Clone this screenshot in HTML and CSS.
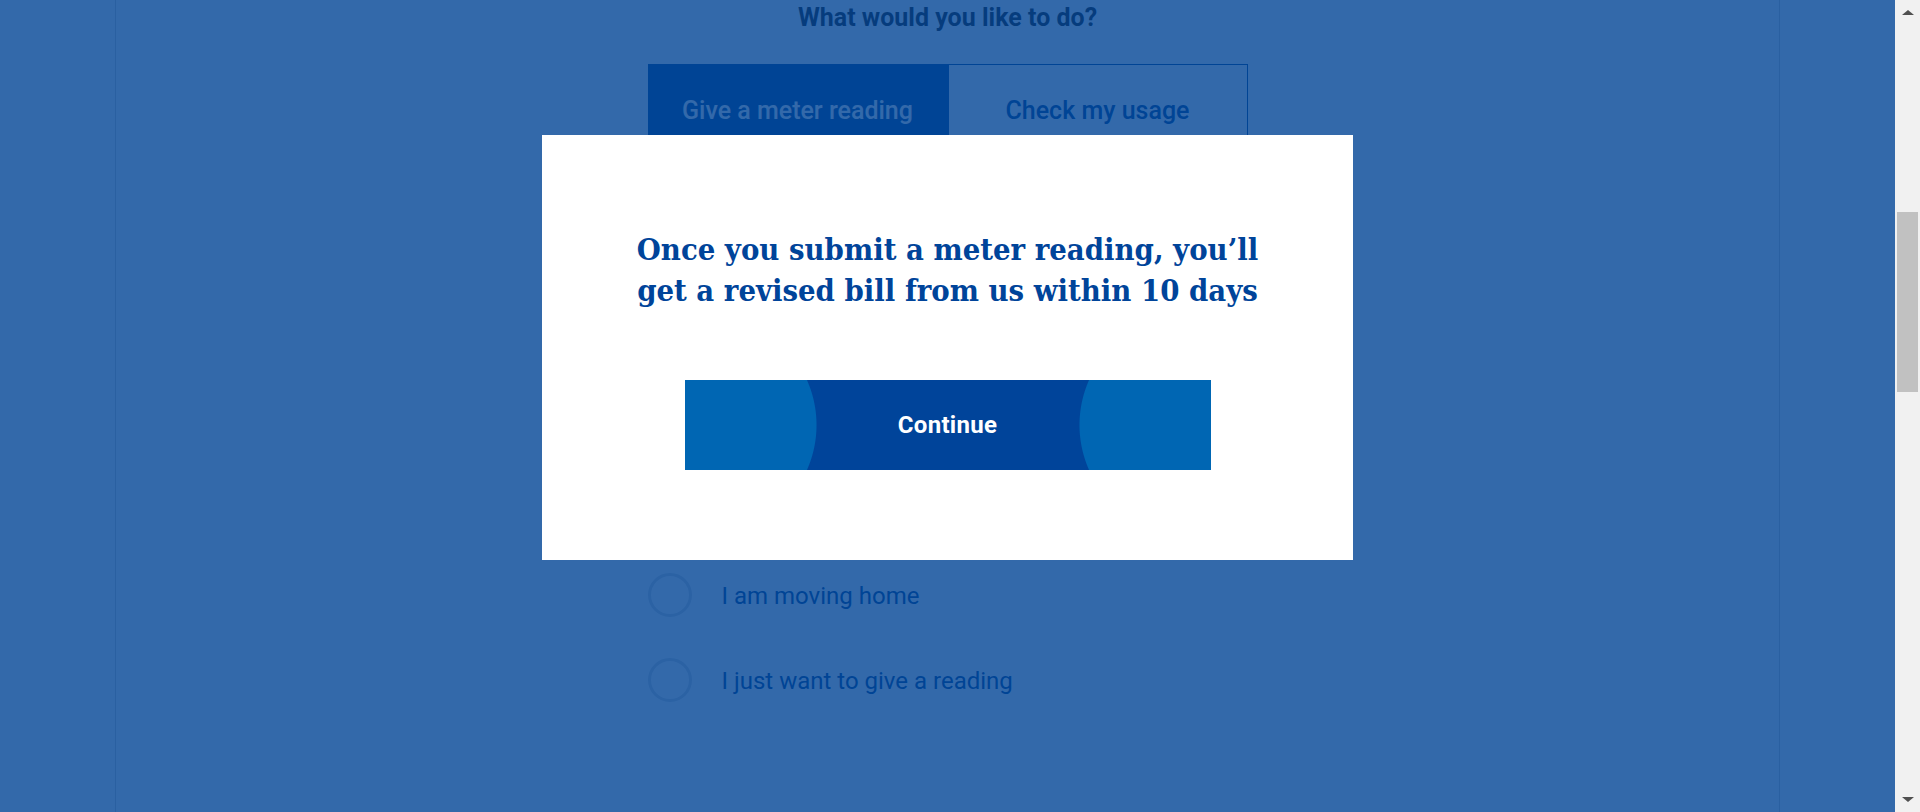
FILE: index.html
```html
<!DOCTYPE html>
<html lang="en">
<head>
<meta charset="utf-8">
<title>Give a meter reading</title>
<link rel="stylesheet" href="styles.css">
</head>
<body>
<div class="app">
  <main class="page">
    <div class="container">
      <h2 class="question">What would you like to do?</h2>
      <div class="tabs">
        <button class="tab tab-active">Give a meter reading</button>
        <button class="tab">Check my usage</button>
      </div>
      <ul class="options">
        <li class="option"><span class="radio"></span><span class="option-label">I am moving home</span></li>
        <li class="option"><span class="radio"></span><span class="option-label">I just want to give a reading</span></li>
      </ul>
    </div>
    <div class="overlay"></div>
    <div class="modal" role="dialog">
      <h1 class="modal-title">Once you submit a meter reading, you’ll<br>get a revised bill from us within 10 days</h1>
      <button class="continue">Continue</button>
    </div>
  </main>
  <div class="scrollbar">
    <span class="arrow arrow-up"></span>
    <div class="track"><div class="thumb"></div></div>
    <span class="arrow arrow-down"></span>
  </div>
</div>
</body>
</html>
```
FILE: styles.css
```css
* { box-sizing: border-box; }
html, body { margin: 0; padding: 0; height: 812px; overflow: hidden; }
body { font-family: Roboto, "Noto Sans", sans-serif; background: #fff; }

.app { display: flex; height: 812px; }
.page { position: relative; flex: 1; height: 812px; overflow: hidden; background: #fff; }

.container {
  width: 1665px;
  height: 812px;
  margin: 0 auto;
  border-left: 1px solid #cfcfcf;
  border-right: 1px solid #cfcfcf;
  display: flex;
  flex-direction: column;
  align-items: center;
}

.question {
  margin: 3px 0 0 0;
  font-size: 25px;
  line-height: 29px;
  font-weight: 700;
  color: #1e1e1e;
}

.tabs { display: flex; margin-top: 32px; width: 600px; }
.tab {
  flex: 1;
  height: 87px;
  font-family: Roboto, sans-serif;
  font-size: 25px;
  font-weight: 500;
  border: 1px solid #004595;
  background: #fff;
  color: #004595;
  padding: 5px 0 0 0;
}
.tab-active { background: #004595; color: #fff; }

.options {
  list-style: none;
  margin: 422px 0 0 0;
  padding: 0;
  width: 600px;
  display: flex;
  flex-direction: column;
  gap: 41px;
}
.option { display: flex; align-items: center; height: 44px; }
.radio {
  width: 44px; height: 44px;
  border-radius: 50%;
  border: 3px solid #d6d9df;
  flex: none;
}
.option-label {
  margin-left: 30px;
  padding-top: 2px;
  font-size: 24px;
  color: #004595;
}

.overlay {
  position: absolute;
  inset: 0;
  background: rgba(0, 68, 149, 0.8);
}

.modal {
  position: absolute;
  top: 135px;
  left: 542px;
  width: 811px;
  height: 425px;
  background: #fff;
  display: flex;
  flex-direction: column;
  align-items: center;
  padding-top: 94px;
}
.modal-title {
  margin: 0;
  font-family: "DejaVu Serif Condensed", "DejaVu Serif", serif;
  font-size: 30.7px;
  line-height: 41px;
  font-weight: 700;
  color: #00449a;
  text-align: center;
}
.continue {
  margin-top: 69px;
  width: 526px;
  height: 90px;
  border: 0;
  padding: 0;
  font-family: Roboto, sans-serif;
  font-size: 24px;
  font-weight: 700;
  letter-spacing: 0.3px;
  color: #fff;
  background:
    radial-gradient(circle 111px at 21px 50%, #0066b3 110px, rgba(0,102,179,0) 111px),
    radial-gradient(circle 111px at calc(100% - 21px) 50%, #0066b3 110px, rgba(0,102,179,0) 111px),
    #00449a;
}

.scrollbar {
  width: 25px;
  height: 812px;
  background: #f1f1f1;
  display: flex;
  flex-direction: column;
  align-items: center;
}
.arrow { width: 0; height: 0; border-left: 6px solid transparent; border-right: 6px solid transparent; flex: none; }
.arrow-up { border-bottom: 5px solid #505050; margin-top: 10px; }
.arrow-down { border-top: 5px solid #505050; margin-bottom: 10px; }
.track { flex: 1; width: 100%; padding-top: 197px; display: flex; justify-content: center; }
.thumb { width: 21px; height: 180px; background: #c1c1c1; }
```
